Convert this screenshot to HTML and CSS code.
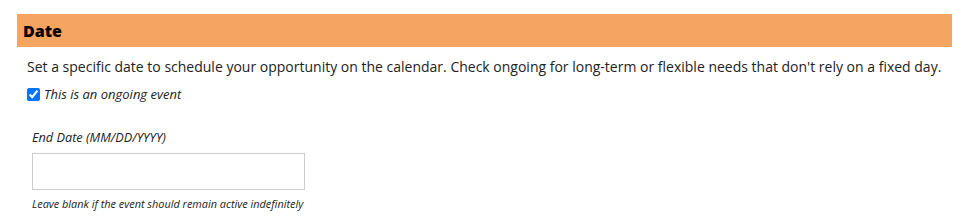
FILE: index.html
```html
<!DOCTYPE html>
<html lang="en">
<head>
    <meta charset="UTF-8">
    <title>Date</title>
    <link rel="stylesheet" href="styles.css">
</head>
<body>
    <div class="section">
        <h2 class="section-title">Date</h2>
        <div class="section-body">
            <p class="intro">Set a specific date to schedule your opportunity on the calendar. Check ongoing for long-term or flexible needs that don't rely on a fixed day.</p>
            <label class="check">
                <input type="checkbox" checked>
                <span>This is an ongoing event</span>
            </label>
            <div class="field">
                <label for="endDate">End Date (MM/DD/YYYY)</label>
                <input type="text" id="endDate">
                <small>Leave blank if the event should remain active indefinitely</small>
            </div>
        </div>
    </div>
</body>
</html>
```

FILE: styles.css
```css
body {
    margin: 0;
    font-family: "Open Sans", Arial, sans-serif;
    color: #222;
    background-color: white;
}
.section {
    width: 935px;
    margin: 14px 0 0 17px;
}
.section-title {
    margin: 0;
    height: 33px;
    line-height: 34px;
    padding-left: 6px;
    font-size: 16px;
    font-weight: 800;
    color: #000;
    background-color: #f6a461;
}
.section-body {
    padding: 0 10px;
}
.intro {
    margin: 10px 0 8px;
    font-size: 14px;
    line-height: 20px;
}
.check {
    display: flex;
    align-items: center;
    gap: 4px;
    font-size: 13px;
    font-style: italic;
}
.check input {
    margin: 0;
    width: 13px;
    height: 13px;
}
.field {
    margin-top: 26px;
    padding-left: 5px;
}
.field label {
    display: block;
    font-size: 12.7px;
    line-height: 17px;
    font-style: italic;
    margin-bottom: 7px;
}
.field input {
    display: block;
    width: 273px;
    height: 37px;
    box-sizing: border-box;
    border: 1px solid #ccc;
    border-radius: 0;
    margin: 0;
}
.field small {
    display: block;
    margin-top: 6px;
    font-size: 10.9px;
    line-height: 15px;
    font-style: italic;
}
```
